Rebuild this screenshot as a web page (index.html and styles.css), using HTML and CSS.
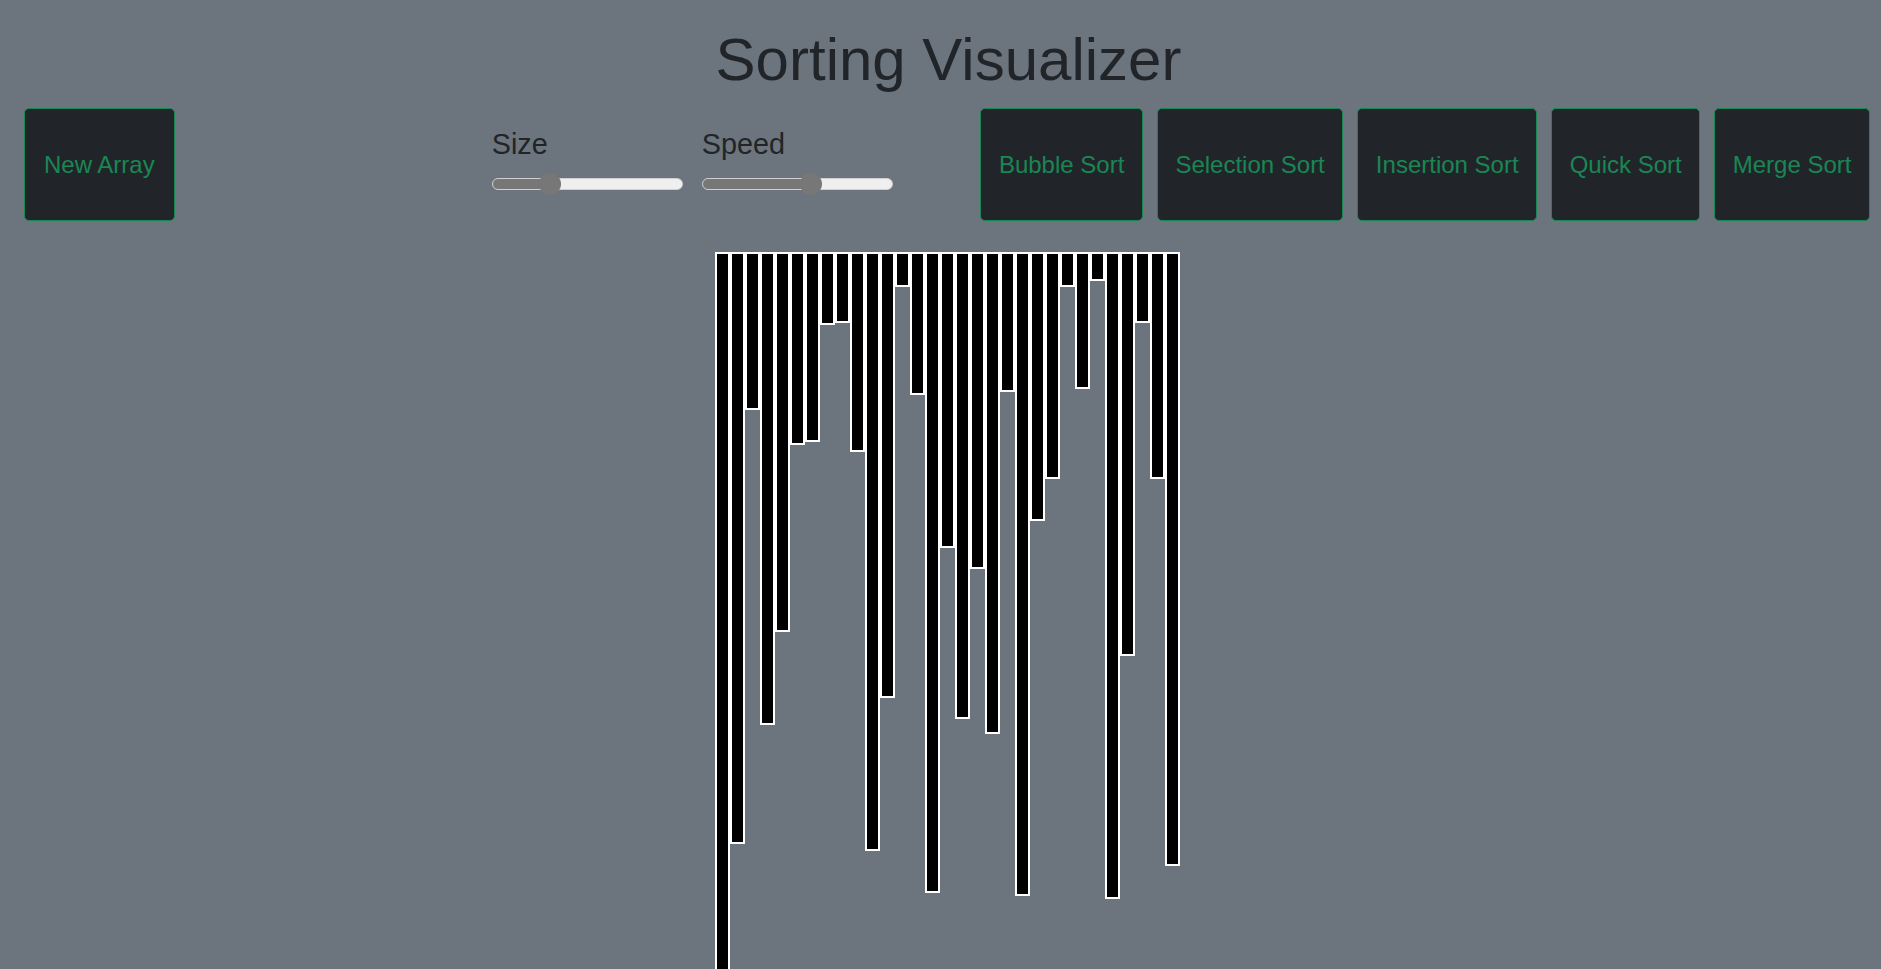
FILE: index.html
```html
<!DOCTYPE html>
<html lang="en">
<head>
<meta charset="utf-8">
<title>Sorting Visualizer</title>
<link rel="stylesheet" href="styles.css">
</head>
<body>
<header class="title-wrap">
  <h1 class="title">Sorting Visualizer</h1>
</header>
<div class="toolbar">
  <button class="btn btn-new">New Array</button>
  <div class="controls">
    <div class="control">
      <label class="control-label">Size</label>
      <input class="slider" type="range" min="0" max="1000" value="275" style="--p:30%">
    </div>
    <div class="control">
      <label class="control-label">Speed</label>
      <input class="slider" type="range" min="0" max="1000" value="580" style="--p:57%">
    </div>
  </div>
  <div class="algos">
    <button class="btn">Bubble Sort</button>
    <button class="btn">Selection Sort</button>
    <button class="btn">Insertion Sort</button>
    <button class="btn">Quick Sort</button>
    <button class="btn">Merge Sort</button>
  </div>
</div>
<div class="bars">
  <div class="bar" style="height:760px"></div>
  <div class="bar" style="height:592px"></div>
  <div class="bar" style="height:158px"></div>
  <div class="bar" style="height:473px"></div>
  <div class="bar" style="height:380px"></div>
  <div class="bar" style="height:193px"></div>
  <div class="bar" style="height:190px"></div>
  <div class="bar" style="height:73px"></div>
  <div class="bar" style="height:71px"></div>
  <div class="bar" style="height:200px"></div>
  <div class="bar" style="height:599px"></div>
  <div class="bar" style="height:446px"></div>
  <div class="bar" style="height:35px"></div>
  <div class="bar" style="height:143px"></div>
  <div class="bar" style="height:641px"></div>
  <div class="bar" style="height:296px"></div>
  <div class="bar" style="height:467px"></div>
  <div class="bar" style="height:317px"></div>
  <div class="bar" style="height:482px"></div>
  <div class="bar" style="height:140px"></div>
  <div class="bar" style="height:644px"></div>
  <div class="bar" style="height:269px"></div>
  <div class="bar" style="height:227px"></div>
  <div class="bar" style="height:35px"></div>
  <div class="bar" style="height:137px"></div>
  <div class="bar" style="height:29px"></div>
  <div class="bar" style="height:647px"></div>
  <div class="bar" style="height:404px"></div>
  <div class="bar" style="height:71px"></div>
  <div class="bar" style="height:227px"></div>
  <div class="bar" style="height:614px"></div>
</div>
</body>
</html>
```
FILE: styles.css
```css
html, body {
  margin: 0;
  padding: 0;
  overflow: hidden;
}

body {
  background: #6c757d;
  color: #212529;
  font-family: "Liberation Sans", Arial, sans-serif;
}

.title-wrap {
  padding: 24px 0 0 16px;
  text-align: center;
}

.title {
  margin: 0;
  font-size: 60px;
  font-weight: 400;
  line-height: 72px;
  color: #212529;
}

.toolbar {
  display: flex;
  align-items: flex-start;
  margin-top: 12px;
  padding-left: 24px;
}

.btn {
  box-sizing: border-box;
  display: inline-flex;
  align-items: center;
  justify-content: center;
  height: 113px;
  padding: 0 17.7px;
  margin: 0;
  background: #212529;
  color: #198754;
  border: 1px solid #198754;
  border-radius: 5px;
  font-family: "Liberation Sans", Arial, sans-serif;
  font-size: 24px;
  line-height: 1.5;
  white-space: nowrap;
  cursor: pointer;
}

.btn-new {
  padding: 0 19px;
}

.controls {
  display: flex;
  gap: 19px;
  margin-left: 317px;
  padding-top: 19px;
}

.control {
  display: flex;
  flex-direction: column;
  gap: 11px;
}

.control-label {
  font-size: 28.8px;
  line-height: 34.5px;
  color: #212529;
}

.slider {
  -webkit-appearance: none;
  appearance: none;
  box-sizing: border-box;
  width: 191px;
  height: 12px;
  margin: 5px 0;
  border-radius: 6px;
  border: 1px solid #d0d0d0;
  background: linear-gradient(to right, #777 0, #777 var(--p), #efefef var(--p), #efefef 100%);
  outline: none;
}

.slider::-webkit-slider-thumb {
  -webkit-appearance: none;
  appearance: none;
  width: 22px;
  height: 22px;
  border-radius: 50%;
  background: #777;
  border: none;
}

.algos {
  display: flex;
  gap: 13.7px;
  margin-left: 87.5px;
}

.bars {
  display: flex;
  justify-content: center;
  align-items: flex-start;
  margin-top: 31px;
  padding-left: 14px;
}

.bar {
  box-sizing: border-box;
  width: 15px;
  flex: 0 0 15px;
  background: #000;
  border: 2px solid #fff;
}
```
